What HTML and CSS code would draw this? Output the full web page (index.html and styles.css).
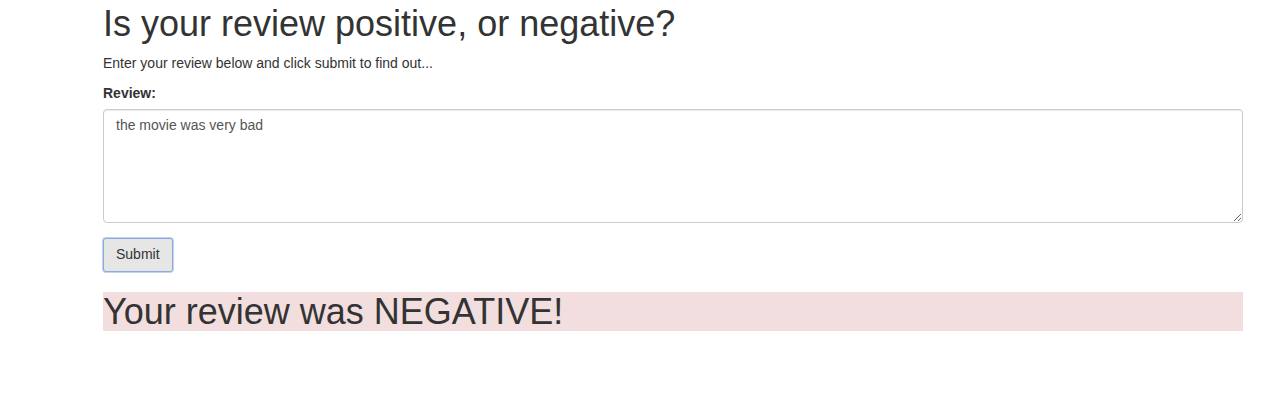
FILE: index.html
```html
<!DOCTYPE html>
<html>
<head>
<meta charset="utf-8">
<link rel="stylesheet" href="styles.css">
</head>
<body>
<div class="container">
  <h1 class="title">Is your review positive, or negative?</h1>
  <p class="lead-text">Enter your review below and click submit to find out...</p>
  <form class="review-form">
    <div class="form-group">
      <label class="field-label" for="review">Review:</label>
      <textarea id="review" class="form-control" rows="5">the movie was very bad</textarea>
    </div>
    <button type="button" class="btn">Submit</button>
  </form>
  <h1 class="result">Your review was NEGATIVE!</h1>
</div>
</body>
</html>
```
FILE: styles.css
```css
html, body {
  margin: 0;
  padding: 0;
  background: #fff;
}
body {
  font-family: "Liberation Sans", Arial, Helvetica, sans-serif;
  font-size: 14px;
  line-height: 1.428571;
  color: #333;
}
.container {
  width: 1140px;
  margin-left: 103px;
  padding-top: 4px;
}
.title {
  font-size: 36px;
  font-weight: 500;
  line-height: 1.1;
  margin: 0 0 10px;
}
.lead-text {
  margin: 0 0 10px;
}
.review-form {
  margin: 0;
}
.form-group {
  margin: 0 0 15px;
}
.field-label {
  display: block;
  font-weight: bold;
  margin: 0 0 5px;
}
.form-control {
  display: block;
  box-sizing: border-box;
  width: 100%;
  height: 114px;
  padding: 6px 12px;
  font-family: inherit;
  font-size: 14px;
  line-height: 1.428571;
  color: #555;
  background: #fff;
  border: 1px solid #ccc;
  border-radius: 4px;
  box-shadow: inset 0 1px 1px rgba(0,0,0,0.075);
  margin: 0;
}
.btn {
  display: block;
  box-sizing: border-box;
  height: 34px;
  padding: 6px 12px;
  font-family: inherit;
  font-size: 14px;
  line-height: 1.428571;
  color: #333;
  background: #e6e6e6;
  border: 1px solid #8aa9dc;
  border-radius: 3px;
  box-shadow: 0 0 0 1px #c2d4f0;
  margin: 0;
}
.result {
  font-size: 36px;
  font-weight: 500;
  line-height: 1.1;
  margin: 20px 0 0;
  background: #f2dede;
}
```
